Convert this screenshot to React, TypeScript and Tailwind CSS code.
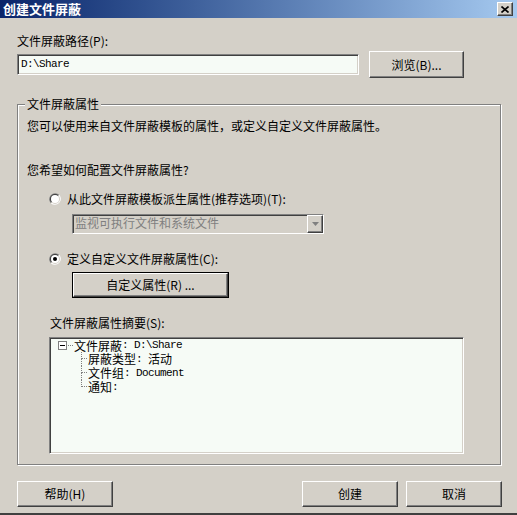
import React from "react";

const raised =
  "border border-t-white border-l-white border-b-[#404040] border-r-[#404040] shadow-[inset_-1px_-1px_0_#808080]";
const sunken =
  "border border-t-[#808080] border-l-[#808080] border-b-white border-r-white shadow-[inset_1px_1px_0_#404040,inset_-1px_-1px_0_#d4d0c8]";
const mono = "font-['Liberation_Mono',monospace] text-[11px] tracking-[-0.6px] whitespace-pre";

function Radio({ checked }: { checked?: boolean }) {
  return (
    <svg width="12" height="12" viewBox="0 0 12 12" className="shrink-0">
      <path d="M1.76 10.24A6 6 0 0 1 10.24 1.76Z" fill="#808080" />
      <path d="M10.24 1.76A6 6 0 0 1 1.76 10.24Z" fill="#ffffff" />
      <path d="M2.46 9.54A5 5 0 0 1 9.54 2.46Z" fill="#404040" />
      <path d="M9.54 2.46A5 5 0 0 1 2.46 9.54Z" fill="#d4d0c8" />
      <circle cx="6" cy="6" r="4" fill="#ffffff" />
      {checked && <circle cx="6" cy="6" r="2" fill="#000000" />}
    </svg>
  );
}

function Button({ label, className }: { label: React.ReactNode; className?: string }) {
  return (
    <div className={`${raised} flex items-center justify-center h-[26px] bg-[#d4d0c8] ${className ?? ""}`}>
      {label}
    </div>
  );
}

function TreeChild({ text, last }: { text: React.ReactNode; last?: boolean }) {
  return (
    <div className="flex h-[14px] items-stretch">
      <div className="flex flex-col w-[6px]">
        <div className="h-[7px] border-l border-b border-dotted border-[#808080]" />
        <div className={`h-[7px] ${last ? "" : "border-l border-dotted border-[#808080]"}`} />
      </div>
      <div className="ml-[1px] leading-[14px] flex items-center">{text}</div>
    </div>
  );
}

export default function App() {
  return (
    <div className="w-[517px] h-[515px] bg-[#d4d0c8] flex flex-col text-[12px] text-black font-['Noto_Sans_CJK_SC',sans-serif] border-b-2 border-[#404040] overflow-hidden">
      {/* title bar */}
      <div className="h-[18px] shrink-0 flex items-center justify-between pl-[3px] pr-[4px] bg-linear-to-r from-[#0a246a] to-[#a6caf0]">
        <span className="text-white font-bold text-[13px] leading-[18px]">创建文件屏蔽</span>
        <div className={`${raised} w-[16px] h-[14px] bg-[#d4d0c8] flex items-center justify-center`}>
          <svg width="8" height="7" viewBox="0 0 8 7">
            <path d="M0.5 0.5L7.5 6.5M7.5 0.5L0.5 6.5" stroke="#000" strokeWidth="1.6" />
          </svg>
        </div>
      </div>

      <div className="pl-[17px] flex flex-col">
        <div className="mt-[16px] h-[14px] leading-[14px]">文件屏蔽路径(P):</div>
        <div className="mt-[3px] h-[27px] flex items-center">
          <div className={`${sunken} w-[342px] h-[21px] bg-[#f6fbf6] flex items-center pl-[3px]`}>
            <span className={mono}>D:\Share</span>
          </div>
          <Button label="浏览(B)..." className="ml-[10px] w-[95px] h-[27px]" />
        </div>

        {/* group box */}
        <div className="relative mt-[26px] w-[484px] h-[361px] border border-[#808080] shadow-[inset_1px_1px_0_#fff,1px_1px_0_#fff] pt-[14px] pl-[9px] flex flex-col">
          <div className="absolute left-[7px] top-[-8px] h-[14px] leading-[14px] px-[2px] bg-[#d4d0c8]">文件屏蔽属性</div>
          <div className="h-[14px] leading-[14px]">您可以使用来自文件屏蔽模板的属性，或定义自定义文件屏蔽属性。</div>
          <div className="mt-[30px] h-[14px] leading-[14px]">您希望如何配置文件屏蔽属性?</div>

          <div className="mt-[15px] ml-[22px] h-[14px] flex items-center gap-[6px]">
            <Radio />
            <span className="leading-[14px]">从此文件屏蔽模板派生属性(推荐选项)(T):</span>
          </div>
          <div className={`${sunken} mt-[8px] ml-[45px] w-[252px] h-[20px] flex items-stretch`}>
            <div className="flex-1 pl-[2px] leading-[16px] text-[#808080]">监视可执行文件和系统文件</div>
            <div className={`${raised} w-[16px] flex items-center justify-center bg-[#d4d0c8]`}>
              <svg width="7" height="4" viewBox="0 0 7 4">
                <path d="M0 0H7L3.5 4Z" fill="#808080" />
              </svg>
            </div>
          </div>

          <div className="mt-[18px] ml-[22px] h-[14px] flex items-center gap-[6px]">
            <Radio checked />
            <span className="leading-[14px]">定义自定义文件屏蔽属性(C):</span>
          </div>
          <div className="mt-[6px] ml-[45px] w-[157px] h-[26px] border border-black">
            <Button label="自定义属性(R) ..." className="h-full" />
          </div>

          <div className="mt-[18px] ml-[23px] h-[14px] leading-[14px]">文件屏蔽属性摘要(S):</div>
          <div className={`${sunken} mt-[7px] ml-[22px] w-[415px] h-[117px] bg-[#f6fbf6] pl-[8px] pt-[1px] flex flex-col`}>
            <div className="h-[13px] flex items-center">
              <div className="w-[9px] h-[9px] border border-[#808080] bg-white flex items-center justify-center">
                <div className="w-[5px] h-[1px] bg-black" />
              </div>
              <div className="ml-[1px] w-[5px] border-t border-dotted border-[#808080]" />
              <span className="ml-[1px] leading-[13px] flex items-center">
                文件屏蔽<span className={mono}>: D:\Share</span>
              </span>
            </div>
            <div className="ml-[23px] flex flex-col">
              <TreeChild text={<>屏蔽类型<span className={mono}>: </span>活动</>} />
              <TreeChild text={<>文件组<span className={mono}>: Document</span></>} />
              <TreeChild text={<>通知<span className={mono}>:</span></>} last />
            </div>
          </div>
        </div>

        <div className="mt-[16px] w-[485px] flex items-center">
          <Button label="帮助(H)" className="w-[96px]" />
          <div className="flex-1" />
          <Button label="创建" className="w-[96px]" />
          <Button label="取消" className="w-[96px] ml-[8px]" />
        </div>
      </div>
    </div>
  );
}
